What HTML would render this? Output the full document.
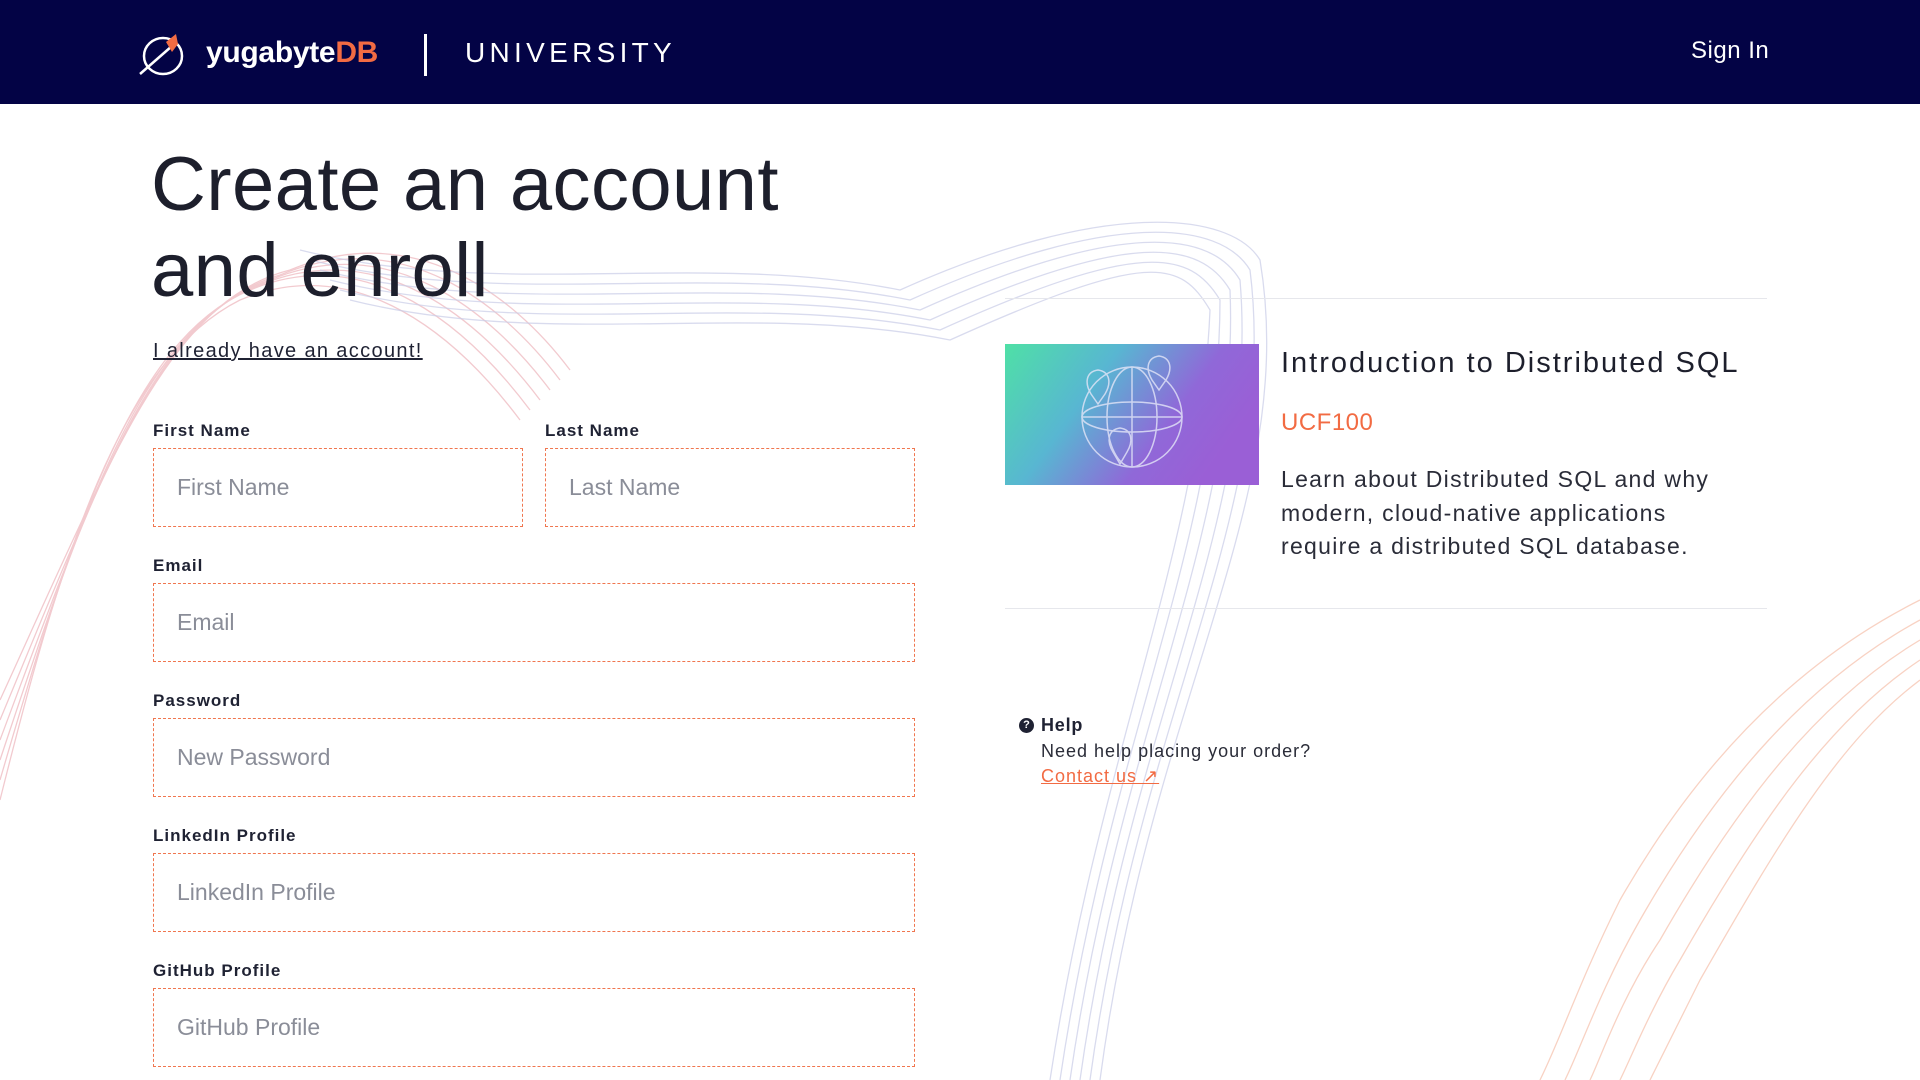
<!DOCTYPE html>
<html><head><meta charset="utf-8"><style>
*{margin:0;padding:0;box-sizing:border-box}
body{width:1920px;height:1080px;overflow:hidden;background:#fff;font-family:"Liberation Sans",sans-serif;color:#1f2233;position:relative}
.hdr{position:absolute;left:0;top:0;width:1920px;height:104px;background:#030345}
.bg{position:absolute;left:0;top:104px}
.abs{position:absolute}
h1{position:absolute;left:151px;top:142px;font-size:76px;font-weight:400;line-height:86px;letter-spacing:0.4px;color:#1d1f2c}
.lbl{position:absolute;font-size:17px;font-weight:700;letter-spacing:1px;color:#1f2233}
.inp{position:absolute;height:79px;border:1.5px dashed #f0764f;font-size:23px;color:#8a8d98;padding-left:23px;line-height:76px;background:rgba(255,255,255,0.6)}
hr{position:absolute;border:0;border-top:1px solid #e6e7ec}
</style></head><body>
<svg class="bg" width="1920" height="976" viewBox="0 104 1920 976" fill="none">
<g stroke="#e8a0a8" stroke-width="1.3" opacity="0.55">
<path d="M0 800 C60 560 120 360 240 300 C360 250 460 340 520 420"/>
<path d="M0 780 C70 540 130 340 250 290 C370 240 470 330 530 410"/>
<path d="M0 760 C80 520 140 330 260 285 C380 235 480 320 540 400"/>
<path d="M0 740 C90 500 150 320 270 280 C390 230 490 310 550 390"/>
<path d="M0 720 C100 480 160 310 280 275 C400 225 500 300 560 380"/>
<path d="M0 700 C110 460 170 300 290 270 C410 220 510 290 570 370"/>
</g>
<g stroke="#c9cde8" stroke-width="1.3" opacity="0.7">
<path d="M300 250 C500 300 700 250 900 290 C1100 200 1230 210 1260 260 C1300 500 1150 700 1100 1080"/>
<path d="M310 260 C510 310 710 260 910 300 C1110 210 1220 220 1250 270 C1280 510 1140 710 1090 1080"/>
<path d="M320 270 C520 320 720 270 920 310 C1120 220 1210 230 1240 280 C1260 520 1130 720 1080 1080"/>
<path d="M330 280 C530 330 730 280 930 320 C1130 230 1200 240 1230 290 C1240 530 1120 730 1070 1080"/>
<path d="M340 290 C540 340 740 290 940 330 C1140 240 1190 250 1220 300 C1220 540 1110 740 1060 1080"/>
<path d="M350 300 C550 350 750 300 950 340 C1150 250 1180 260 1210 310 C1200 550 1100 750 1050 1080"/>
</g>
<g stroke="#f4b59c" stroke-width="1.3" opacity="0.6">
<path d="M1920 600 C1800 660 1700 760 1620 900 C1580 980 1560 1040 1540 1080"/>
<path d="M1920 620 C1810 680 1720 780 1640 920 C1600 990 1580 1050 1565 1080"/>
<path d="M1920 640 C1820 700 1740 800 1660 940 C1620 1000 1600 1060 1590 1080"/>
<path d="M1920 660 C1830 720 1760 820 1680 960 C1650 1010 1630 1060 1620 1080"/>
<path d="M1920 680 C1840 740 1780 840 1700 980 C1680 1020 1660 1060 1650 1080"/>
</g>
</svg>
<div class="hdr">
<svg class="abs" style="left:136px;top:32px" width="56" height="46" viewBox="0 0 56 46" fill="none">
<ellipse cx="27" cy="24" rx="19" ry="18" stroke="#fff" stroke-width="2.5"/>
<path d="M4 42 L36 14" stroke="#fff" stroke-width="2.5"/>
<path d="M30 10 L40 2 L42 12 L36 20 Z" fill="#f26b43"/>
</svg>
<div class="abs" style="left:206px;top:36px;font-size:30px;font-weight:700;color:#fff;letter-spacing:-0.3px">yugabyte<span style="color:#f26b43">DB</span></div>
<div class="abs" style="left:424px;top:34px;width:3px;height:42px;background:#fff"></div>
<div class="abs" style="left:465px;top:37px;font-size:28px;color:#fff;letter-spacing:4.3px">UNIVERSITY</div>
<div class="abs" style="left:1691px;top:37px;font-size:24px;color:#fff;letter-spacing:0.5px">Sign In</div>
</div>
<h1>Create an account<br>and enroll</h1>
<div class="abs" style="left:153px;top:340px;font-size:20px;text-decoration:underline;letter-spacing:1.35px">I already have an account!</div>
<div class="lbl" style="left:153px;top:421px">First Name</div>
<div class="lbl" style="left:545px;top:421px">Last Name</div>
<div class="inp" style="left:153px;top:448px;width:370px">First Name</div>
<div class="inp" style="left:545px;top:448px;width:370px">Last Name</div>
<div class="lbl" style="left:153px;top:556px">Email</div>
<div class="inp" style="left:153px;top:583px;width:762px">Email</div>
<div class="lbl" style="left:153px;top:691px">Password</div>
<div class="inp" style="left:153px;top:718px;width:762px">New Password</div>
<div class="lbl" style="left:153px;top:826px">LinkedIn Profile</div>
<div class="inp" style="left:153px;top:853px;width:762px">LinkedIn Profile</div>
<div class="lbl" style="left:153px;top:961px">GitHub Profile</div>
<div class="inp" style="left:153px;top:988px;width:762px">GitHub Profile</div>
<hr style="left:1005px;top:298px;width:762px">
<svg class="abs" style="left:1005px;top:344px" width="254" height="141" viewBox="0 0 254 141">
<defs><linearGradient id="g" x1="0" y1="0" x2="1" y2="0.4"><stop offset="0" stop-color="#4fe0a6"/><stop offset="0.4" stop-color="#58b6d2"/><stop offset="0.75" stop-color="#9068d8"/><stop offset="1" stop-color="#9a5fd6"/></linearGradient></defs>
<rect width="254" height="141" fill="url(#g)"/>
<g stroke="#e4e6f8" stroke-width="1.5" fill="none" opacity="0.8">
<circle cx="127" cy="73" r="50"/><ellipse cx="127" cy="73" rx="25" ry="50"/><ellipse cx="127" cy="73" rx="50" ry="15"/><path d="M77 73 H177 M127 23 V123"/>
<path d="M86 50 C80 40 80 28 93 26 C106 28 106 40 100 50 L93 60 Z"/><path d="M147 36 C141 26 141 14 154 12 C167 14 167 26 161 36 L154 46 Z"/><path d="M108 108 C102 98 102 86 115 84 C128 86 128 98 122 108 L115 120 Z"/>
</g></svg>
<div class="abs" style="left:1281px;top:347px;font-size:29px;font-weight:400;color:#1d1f2c;letter-spacing:2px">Introduction to Distributed SQL</div>
<div class="abs" style="left:1281px;top:409px;font-size:24px;color:#f26b43;letter-spacing:0.5px">UCF100</div>
<div class="abs" style="left:1281px;top:463px;font-size:23px;line-height:33.5px;color:#2a2c38;letter-spacing:1.3px">Learn about Distributed SQL and why<br>modern, cloud-native applications<br>require a distributed SQL database.</div>
<hr style="left:1005px;top:608px;width:762px">
<div class="abs" style="left:1019px;top:718px;width:15px;height:15px;border-radius:50%;background:#1f2233;color:#fff;font-size:11px;font-weight:700;text-align:center;line-height:15px">?</div>
<div class="abs" style="left:1041px;top:715px;font-size:18px;font-weight:700;letter-spacing:0.8px">Help</div>
<div class="abs" style="left:1041px;top:741px;font-size:18px;letter-spacing:1px;color:#2a2c38">Need help placing your order?</div>
<div class="abs" style="left:1041px;top:766px;font-size:18px;letter-spacing:1px;color:#f26b43;text-decoration:underline">Contact us ↗</div>
</body></html>
